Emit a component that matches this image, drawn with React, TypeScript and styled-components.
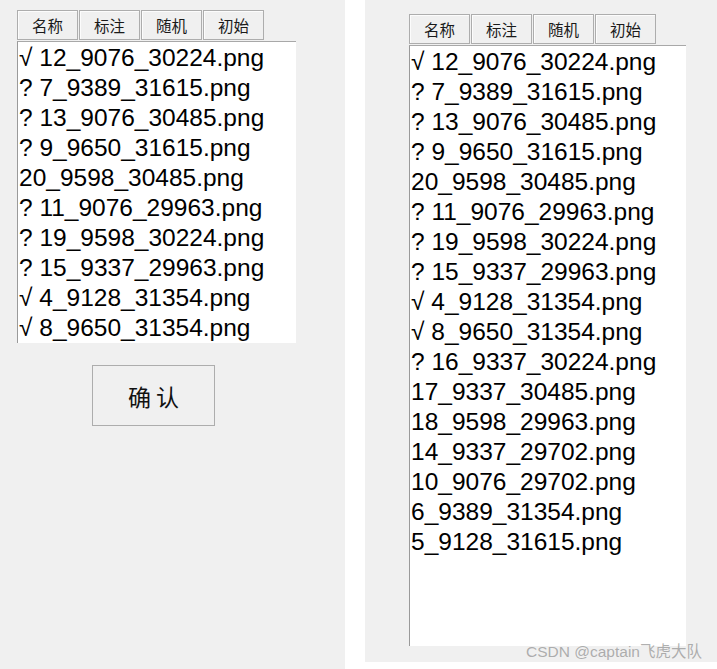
import React from "react";
import styled, { createGlobalStyle } from "styled-components";

const Global = createGlobalStyle`
  html, body { margin: 0; padding: 0; background: #ffffff; }
  body { font-family: "Liberation Sans", Arial, "Noto Sans CJK SC", sans-serif; }
`;

const Page = styled.div`
  position: relative;
  display: flex;
  gap: 20px;
  width: 717px;
  height: 669px;
  overflow: hidden;
`;

const Panel = styled.div<{ $w: number; $h: number; $pt: number; $pl: number }>`
  box-sizing: border-box;
  width: ${(p) => p.$w}px;
  height: ${(p) => p.$h}px;
  background: #f0f0f0;
  padding: ${(p) => p.$pt}px 0 0 ${(p) => p.$pl}px;
  display: flex;
  flex-direction: column;
  align-items: flex-start;
`;

const TabBar = styled.div<{ $mb: number }>`
  display: flex;
  gap: 1px;
  margin-bottom: ${(p) => p.$mb}px;
`;

const Tab = styled.div`
  box-sizing: border-box;
  width: 61px;
  height: 30px;
  border: 1px solid #adadad;
  box-shadow: inset 1px 1px 0 #fcfcfc;
  background: #f0f0f0;
  display: flex;
  align-items: center;
  justify-content: center;
  font-family: "Noto Sans CJK SC", sans-serif;
  font-size: 15.5px;
  color: #1a1a1a;
`;

const List = styled.div<{ $w: number; $h: number }>`
  box-sizing: border-box;
  width: ${(p) => p.$w}px;
  height: ${(p) => p.$h}px;
  background: #ffffff;
  border-top: 1px solid #a8a8a8;
  border-left: 1px solid #9a9a9a;
  padding: 1px 0 0 1px;
  overflow: hidden;
`;

const Row = styled.div`
  height: 30px;
  line-height: 30px;
  font-family: "Liberation Sans", Arial, sans-serif;
  font-size: 24.5px;
  color: #000;
  white-space: nowrap;
`;

const ButtonWrap = styled.div`
  align-self: stretch;
  display: flex;
  padding-left: 75px;
  margin-top: 22px;
`;

const Button = styled.div`
  box-sizing: border-box;
  width: 123px;
  height: 61px;
  border: 1px solid #adadad;
  background: #f0f0f0;
  display: flex;
  align-items: center;
  justify-content: center;
  font-family: "Noto Sans CJK SC", sans-serif;
  font-size: 23px;
  color: #111;
  white-space: pre;
`;

const Watermark = styled.div`
  position: absolute;
  left: 526px;
  top: 639px;
  font-family: "Liberation Sans", "Noto Sans CJK SC", sans-serif;
  font-size: 15.5px;
  color: rgba(150, 150, 150, 0.75);
  white-space: nowrap;
`;

const tabs = ["名称", "标注", "随机", "初始"];

const leftRows = [
  "√ 12_9076_30224.png",
  "? 7_9389_31615.png",
  "? 13_9076_30485.png",
  "? 9_9650_31615.png",
  "20_9598_30485.png",
  "? 11_9076_29963.png",
  "? 19_9598_30224.png",
  "? 15_9337_29963.png",
  "√ 4_9128_31354.png",
  "√ 8_9650_31354.png",
];

const rightRows = [
  ...leftRows,
  "? 16_9337_30224.png",
  "17_9337_30485.png",
  "18_9598_29963.png",
  "14_9337_29702.png",
  "10_9076_29702.png",
  "6_9389_31354.png",
  "5_9128_31615.png",
];

function Tabs({ mb }: { mb: number }) {
  return (
    <TabBar $mb={mb}>
      {tabs.map((t) => (
        <Tab key={t}>{t}</Tab>
      ))}
    </TabBar>
  );
}

export default function App() {
  return (
    <>
      <Global />
      <Page>
        <Panel $w={345} $h={669} $pt={10} $pl={17}>
          <Tabs mb={1} />
          <List $w={279} $h={302}>
            {leftRows.map((r) => (
              <Row key={r}>{r}</Row>
            ))}
          </List>
          <ButtonWrap>
            <Button>确 认</Button>
          </ButtonWrap>
        </Panel>
        <Panel $w={352} $h={662} $pt={14} $pl={44}>
          <Tabs mb={1} />
          <List $w={277} $h={601}>
            {rightRows.map((r) => (
              <Row key={r}>{r}</Row>
            ))}
          </List>
        </Panel>
        <Watermark>CSDN @captain飞虎大队</Watermark>
      </Page>
    </>
  );
}
